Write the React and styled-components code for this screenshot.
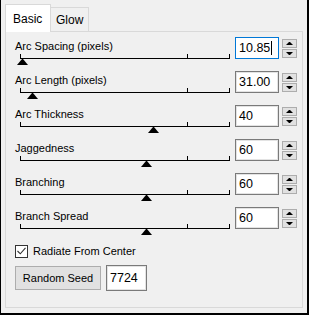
import React from 'react';
import styled, { createGlobalStyle } from 'styled-components';

const GlobalStyle = createGlobalStyle`
  html, body {
    margin: 0;
    padding: 0;
    background: #f0f0f0;
  }
  body {
    font-family: "Liberation Sans", Arial, sans-serif;
    color: #000;
  }
`;

const Window = styled.div`
  width: 309px;
  height: 315px;
  box-sizing: border-box;
  background: #f0f0f0;
  border-left: 1px solid #000;
  border-right: 2px solid #000;
  border-bottom: 2px solid #000;
  padding: 3px 0 0 4px;
  display: flex;
  flex-direction: column;
`;

const TabStrip = styled.div`
  display: flex;
  align-items: flex-end;
  height: 28px;
  position: relative;
  z-index: 1;
`;

const Tab = styled.div`
  box-sizing: border-box;
  width: ${(p) => p.$width}px;
  height: ${(p) => (p.$active ? 28 : 24)}px;
  margin-bottom: ${(p) => (p.$active ? -1 : 0)}px;
  background: ${(p) => (p.$active ? '#fff' : '#f0f0f0')};
  border: 1px solid #d9d9d9;
  border-bottom: none;
  border-left: ${(p) => (p.$active ? '1px solid #d9d9d9' : 'none')};
  font-size: 12px;
  padding: ${(p) => (p.$active ? '7px 0 0 7px' : '5px 0 0 5px')};
`;

const Panel = styled.div`
  box-sizing: border-box;
  width: 298px;
  height: 277px;
  background: #f0f0f0;
  border: 1px solid #d9d9d9;
  padding: 5px 0 0 9px;
  display: flex;
  flex-direction: column;
`;

const Row = styled.div`
  display: flex;
  align-items: flex-start;
  height: 34px;
`;

const SliderArea = styled.div`
  width: 220px;
  display: flex;
  flex-direction: column;
`;

const Label = styled.div`
  font-size: 11px;
  line-height: 14px;
  padding-top: 2px;
  white-space: nowrap;
`;

const Track = styled.div`
  position: relative;
  width: 210px;
  height: 8px;
  margin: 5px 0 0 5px;
  border-top: 1px solid #000;
`;

const Tick = styled.div`
  position: absolute;
  top: -5px;
  width: 1px;
  height: 5px;
  background: #000;
`;

const Thumb = styled.div`
  position: absolute;
  top: 0;
  width: 1px;
  height: 0;
  border-left: 5px solid transparent;
  border-right: 5px solid transparent;
  border-bottom: 6px solid #000;
`;

const NumberBox = styled.div`
  box-sizing: border-box;
  width: 44px;
  height: 22px;
  background: #fff;
  border: 1px solid ${(p) => (p.$focused ? '#0078d7' : '#7a7a7a')};
  box-shadow: inset 0 0 0 1px ${(p) => (p.$focused ? '#fff' : '#e3e3e3')};
  font-size: 12.5px;
  line-height: 20px;
  padding-left: 3px;
  display: flex;
  align-items: center;
`;

const Caret = styled.span`
  display: inline-block;
  width: 1px;
  height: 14px;
  background: #000;
  margin-left: 1px;
`;

const Spinner = styled.div`
  width: 15px;
  margin-left: 3px;
  display: flex;
  flex-direction: column;
  gap: 1px;
  padding-top: 2px;
`;

const SpinButton = styled.div`
  box-sizing: border-box;
  height: 9px;
  background: #e1e1e1;
  border: 1px solid #adadad;
  display: flex;
  align-items: center;
  justify-content: center;
`;

const Arrow = styled.div`
  width: 1px;
  height: 0;
  border-left: 3px solid transparent;
  border-right: 3px solid transparent;
  ${(p) => (p.$down ? 'border-top: 3px solid #000;' : 'border-bottom: 3px solid #000;')}
`;

const CheckRow = styled.div`
  display: flex;
  align-items: center;
  gap: 5px;
  margin-top: 3px;
  height: 14px;
  font-size: 11px;
`;

const CheckBox = styled.div`
  box-sizing: border-box;
  width: 13px;
  height: 13px;
  background: #fff;
  border: 1px solid #333;
  display: flex;
  align-items: center;
  justify-content: center;
`;

const ActionRow = styled.div`
  display: flex;
  align-items: center;
  margin-top: 7px;
`;

const Button = styled.div`
  box-sizing: border-box;
  width: 86px;
  height: 24px;
  background: #e1e1e1;
  border: 1px solid #adadad;
  font-size: 11px;
  display: flex;
  align-items: center;
  justify-content: center;
`;

const SeedBox = styled(NumberBox)`
  width: 41px;
  height: 26px;
  margin-left: 5px;
  padding-left: 3px;
`;

const sliders = [
  { label: 'Arc Spacing (pixels)', value: '10.85', thumb: 22, focused: true },
  { label: 'Arc Length (pixels)', value: '31.00', thumb: 32 },
  { label: 'Arc Thickness', value: '40', thumb: 153 },
  { label: 'Jaggedness', value: '60', thumb: 146 },
  { label: 'Branching', value: '60', thumb: 146 },
  { label: 'Branch Spread', value: '60', thumb: 146 },
];

const ticks = [0, 167, 209];

const SliderRow = ({ label, value, thumb, focused }) => (
  <Row>
    <SliderArea>
      <Label>{label}</Label>
      <Track>
        {ticks.map((t) => (
          <Tick key={t} style={{ left: t }} />
        ))}
        <Thumb style={{ left: thumb - 25 }} />
      </Track>
    </SliderArea>
    <NumberBox $focused={focused}>
      {value}
      {focused && <Caret />}
    </NumberBox>
    <Spinner>
      <SpinButton>
        <Arrow />
      </SpinButton>
      <SpinButton>
        <Arrow $down />
      </SpinButton>
    </Spinner>
  </Row>
);

const App = () => (
  <Window>
    <GlobalStyle />
    <TabStrip>
      <Tab $active $width={46}>Basic</Tab>
      <Tab $width={38}>Glow</Tab>
    </TabStrip>
    <Panel>
      {sliders.map((s) => (
        <SliderRow key={s.label} {...s} />
      ))}
      <CheckRow>
        <CheckBox>
          <svg width="9" height="8" viewBox="0 0 9 8">
            <path d="M0.5 4 L3.3 6.8 L8.5 0.8" fill="none" stroke="#333" strokeWidth="1.1" />
          </svg>
        </CheckBox>
        Radiate From Center
      </CheckRow>
      <ActionRow>
        <Button>Random Seed</Button>
        <SeedBox>7724</SeedBox>
      </ActionRow>
    </Panel>
  </Window>
);

export default App;
